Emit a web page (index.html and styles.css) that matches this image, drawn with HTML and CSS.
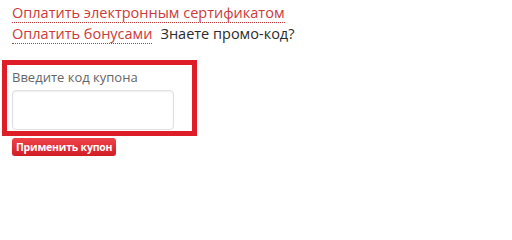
FILE: index.html
```html
<!DOCTYPE html>
<html lang="ru">
<head>
<meta charset="utf-8">
<link rel="stylesheet" href="styles.css">
</head>
<body>
<div class="pay">
  <div class="line"><a class="dlink" href="#">Оплатить электронным сертификатом</a></div>
  <div class="line"><a class="dlink" href="#">Оплатить бонусами</a><span class="promo">Знаете промо-код?</span></div>
</div>
<div class="coupon">
  <label class="label" for="code">Введите код купона</label>
  <input class="field" id="code" type="text">
</div>
<button class="apply">Применить купон</button>
</body>
</html>
```
FILE: styles.css
```css
html, body { margin: 0; padding: 0; background: #fff; }
body {
  font-family: "Open Sans", "Noto Sans", sans-serif;
  padding: 3px 0 0 12px;
}
.pay { font-size: 14.5px; line-height: 21px; }
.line { display: flex; align-items: baseline; }
.dlink {
  color: #cc3a3a;
  text-decoration: none;
  border-bottom: 1px dotted #b83a3a;
  line-height: 19px;
}
.promo { color: #2c2c2c; margin-left: 8px; }
.coupon {
  margin: 16px 0 0 -10px;
  width: 180px;
  border: 5px solid #dd1d27;
  padding: 4px 0 1px 5px;
  display: flex;
  flex-direction: column;
}
.label { font-size: 13px; color: #666; line-height: 17px; margin-bottom: 4px; }
.field {
  width: 162px;
  height: 40px;
  box-sizing: border-box;
  border: 1px solid #e0e0e0;
  border-radius: 4px;
  box-shadow: inset 0 1px 2px rgba(0,0,0,0.06);
  margin: 0;
}
.apply {
  margin-top: 2px;
  display: block;
  height: 18px;
  padding: 0 4px;
  white-space: nowrap;
  border: none;
  border-radius: 3px;
  background: linear-gradient(#f0444a, #d11c25);
  box-shadow: 0 1px 1px rgba(0,0,0,0.2);
  color: #fff;
  font-family: "Open Sans", "Noto Sans", sans-serif;
  font-weight: bold;
  font-size: 10.5px;
  letter-spacing: -0.2px;
  line-height: 18px;
}
```
